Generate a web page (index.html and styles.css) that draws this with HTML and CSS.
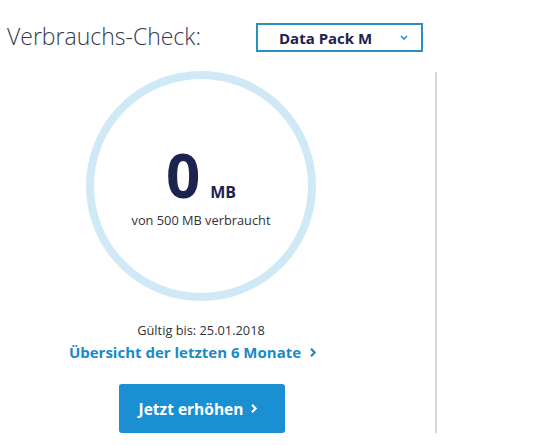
FILE: index.html
```html
<!DOCTYPE html>
<html lang="de">
<head>
<meta charset="utf-8">
<link rel="stylesheet" href="styles.css">
</head>
<body>
<div class="header">
  <h1 class="title">Verbrauchs-Check:</h1>
  <div class="select">
    <span class="select-label">Data Pack M</span>
    <svg class="select-chevron" width="8" height="5" viewBox="0 0 8 5"><path d="M1 1 L4 4 L7 1" fill="none" stroke="#1a8fd1" stroke-width="1.6"/></svg>
  </div>
</div>
<div class="panel">
  <div class="main">
    <div class="ring">
      <div class="amount"><span class="num">0</span><span class="unit">MB</span></div>
      <div class="of">von 500 MB verbraucht</div>
    </div>
    <div class="valid">Gültig bis: 25.01.2018</div>
    <a class="link" href="#">Übersicht der letzten 6 Monate <svg class="chev" width="8" height="11" viewBox="0 0 8 11"><path d="M2 1.8 L5.6 5.5 L2 9.2" fill="none" stroke="currentColor" stroke-width="2.2"/></svg></a>
    <button class="btn">Jetzt erhöhen <svg class="chev" width="8" height="11" viewBox="0 0 8 11"><path d="M2 1.8 L5.6 5.5 L2 9.2" fill="none" stroke="currentColor" stroke-width="2.2"/></svg></button>
  </div>
  <div class="divider"></div>
</div>
</body>
</html>
```
FILE: styles.css
```css
* { box-sizing: border-box; }
body {
  margin: 0;
  background: #fff;
  font-family: "Open Sans", "Noto Sans", sans-serif;
  color: #1c2350;
}
.header {
  display: flex;
  align-items: flex-start;
  height: 72px;
  padding-top: 22px;
}
.title {
  margin: 0 0 0 7px;
  width: 249px;
  font-size: 23px;
  line-height: 28px;
  font-weight: 300;
  color: #343a4e;
}
.select {
  width: 167px;
  height: 29px;
  border: 2px solid #2b8fc0;
  display: flex;
  align-items: center;
  justify-content: space-between;
  padding: 0 13px 0 21px;
  margin-top: 1px;
}
.select-label {
  font-size: 15px;
  font-weight: 700;
  color: #1c2350;
}
.select-chevron { display: block; }
.panel {
  display: flex;
}
.main {
  width: 402px;
  display: flex;
  flex-direction: column;
  align-items: center;
}
.ring {
  width: 230px;
  height: 230px;
  border-radius: 50%;
  border: 8px solid #cfe9f6;
  margin-top: -1px;
  display: flex;
  flex-direction: column;
  align-items: center;
  justify-content: center;
}
.amount {
  display: flex;
  align-items: baseline;
  margin-top: -4px;
  height: 72px;
}
.num {
  font-size: 60px;
  font-weight: 700;
  color: #1c2350;
  line-height: 72px;
}
.unit {
  font-size: 16px;
  font-weight: 700;
  margin-left: 10px;
  color: #1c2350;
}
.of {
  font-size: 12.8px;
  color: #333;
}
.valid {
  margin-top: 20px;
  font-size: 12.8px;
  color: #333;
}
.link {
  margin-top: 3px;
  margin-right: 16px;
  font-size: 15px;
  font-weight: 700;
  color: #1a8ac6;
  text-decoration: none;
  display: flex;
  align-items: center;
  gap: 8px;
}
.btn {
  margin-top: 22px;
  margin-left: 1px;
  width: 166px;
  height: 49px;
  border: none;
  border-radius: 3px;
  padding: 0 6px 0 0;
  background: #1a8fd1;
  color: #fff;
  font-family: inherit;
  font-size: 15.5px;
  font-weight: 700;
  display: flex;
  align-items: center;
  justify-content: center;
  gap: 7px;
}
.chev { display: block; }
.divider {
  width: 2px;
  height: 361px;
  margin-left: 33px;
  background: #d6d6d6;
}
```
